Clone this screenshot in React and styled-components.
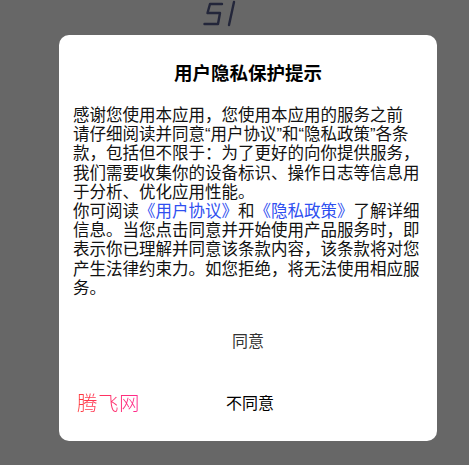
import React from "react";
import styled, { createGlobalStyle } from "styled-components";

const Global = createGlobalStyle`
  html, body { margin: 0; padding: 0; background: #676767; }
  body { font-family: "Liberation Sans", "Noto Sans CJK SC", sans-serif; }
  #root { width: 469px; height: 465px; overflow: hidden; }
`;

const Page = styled.div`
  width: 469px;
  height: 465px;
  display: flex;
  flex-direction: column;
  background: #676767;
`;

const TopStrip = styled.div`
  height: 35px;
  display: flex;
  align-items: flex-start;
  padding-left: 200px;
  box-sizing: border-box;
`;

const Dialog = styled.div`
  margin-left: 59px;
  width: 378px;
  height: 406px;
  background: #ffffff;
  border-radius: 10px;
  box-sizing: border-box;
  padding: 25px 0 0 14px;
  display: flex;
  flex-direction: column;
`;

const Title = styled.h1`
  margin: 0 14px 0 0;
  font-family: "Noto Sans CJK SC", sans-serif;
  font-weight: 700;
  font-size: 18.5px;
  line-height: 24px;
  color: #000;
  text-align: center;
`;

const Body = styled.div`
  margin-top: 22px;
  width: 364px;
  font-family: "Liberation Sans", "Noto Sans CJK SC", sans-serif;
  font-size: 16.5px;
  line-height: 19.2px;
  color: #111;
`;

const Para = styled.p`
  margin: 0;
  white-space: nowrap;
`;

const Link = styled.span`
  color: #2f4ff0;
`;

const AgreeButton = styled.div`
  margin: 31px 14px 0 0;
  text-align: center;
  font-family: "Noto Sans CJK SC", sans-serif;
  font-size: 16px;
  line-height: 22px;
  color: ${(p) => p.$color};
`;

const BottomRow = styled.div`
  margin-top: 40px;
  margin-left: 4px;
  margin-right: 14px;
  display: grid;
  grid-template-columns: 1fr auto 1fr;
  align-items: center;
  height: 22px;
`;

const Watermark = styled.span`
  font-family: "Noto Sans CJK SC", sans-serif;
  font-weight: 300;
  font-size: 20.5px;
  line-height: 22px;
  letter-spacing: 0.5px;
  background: linear-gradient(90deg, #ff3a3a 0%, #ff3070 60%, #ff2a90 100%);
  -webkit-background-clip: text;
  background-clip: text;
  color: transparent;
  justify-self: start;
`;

const Spacer = styled.span``;

function Logo() {
  return (
    <svg width="40" height="30" viewBox="0 0 40 30">
      <g fill="none" stroke="#23263a" strokeWidth="2.4" strokeLinecap="round" strokeLinejoin="round">
        <path d="M22 4 L10 4 L7.5 13 L20 13 L18 24 L4.5 24" />
        <path d="M34 2 L29 25" />
      </g>
    </svg>
  );
}

export default function App() {
  return (
    <Page>
      <Global />
      <TopStrip>
        <Logo />
      </TopStrip>
      <Dialog>
        <Title>用户隐私保护提示</Title>
        <Body>
          <Para>
            感谢您使用本应用，您使用本应用的服务之前<br />
            请仔细阅读并同意“用户协议”和“隐私政策”各条<br />
            款，包括但不限于：为了更好的向你提供服务，<br />
            我们需要收集你的设备标识、操作日志等信息用<br />
            于分析、优化应用性能。
          </Para>
          <Para>
            你可阅读<Link>《用户协议》</Link>和<Link>《隐私政策》</Link>了解详细<br />
            信息。当您点击同意并开始使用产品服务时，即<br />
            表示你已理解并同意该条款内容，该条款将对您<br />
            产生法律约束力。如您拒绝，将无法使用相应服<br />
            务。
          </Para>
        </Body>
        <AgreeButton $color="#333">同意</AgreeButton>
        <BottomRow>
          <Watermark>腾飞网</Watermark>
          <AgreeButton as="span" style={{ margin: 0 }} $color="#000">不同意</AgreeButton>
          <Spacer />
        </BottomRow>
      </Dialog>
    </Page>
  );
}
